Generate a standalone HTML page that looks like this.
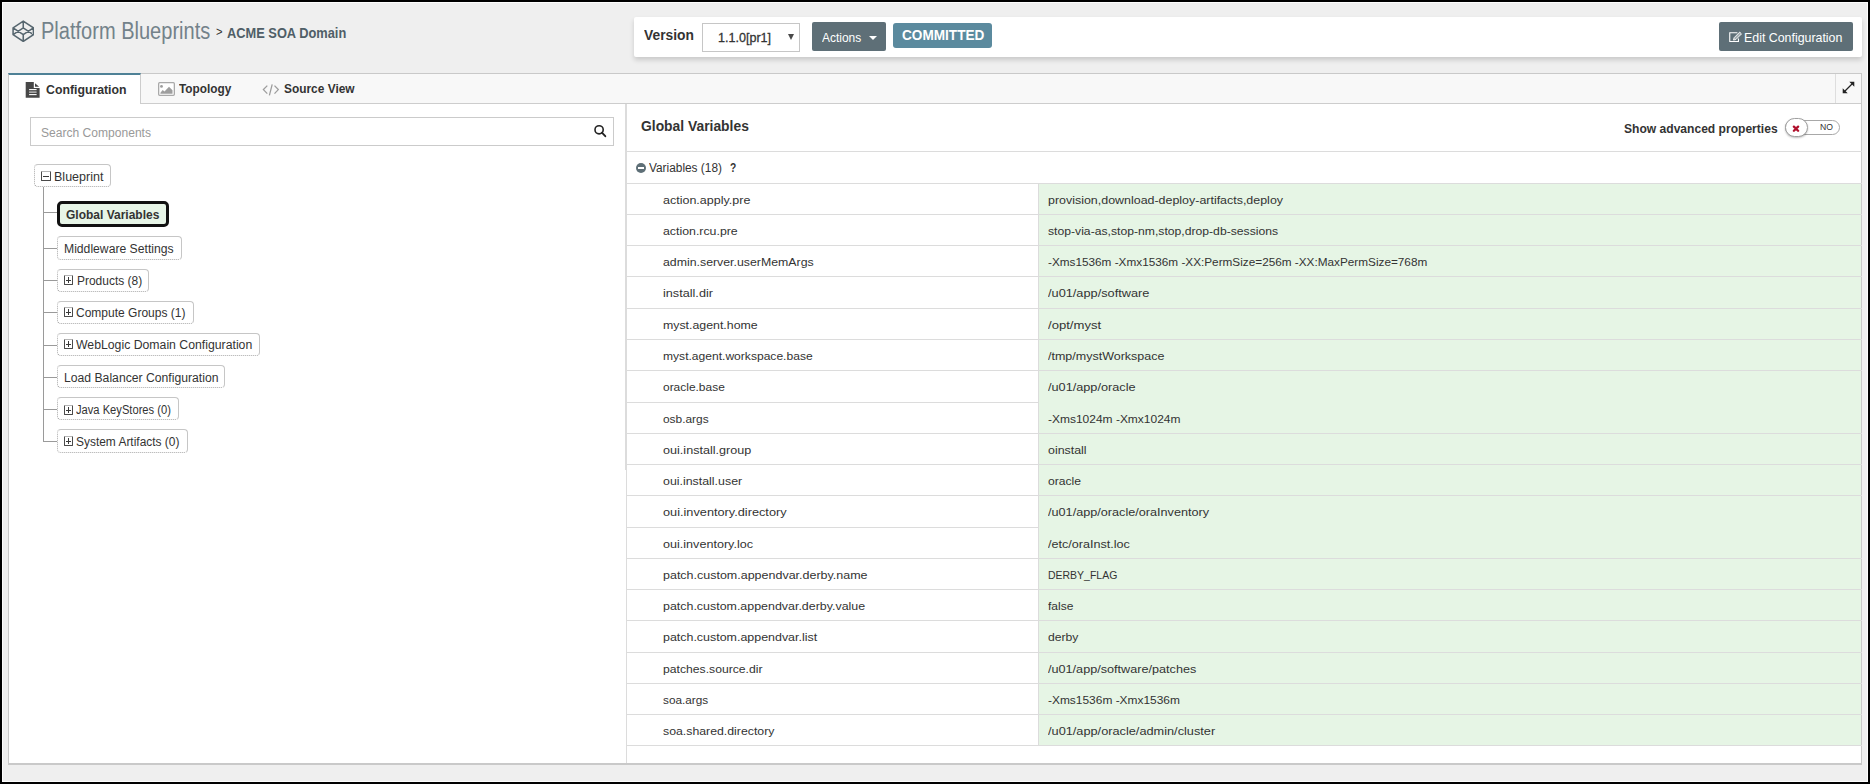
<!DOCTYPE html>
<html><head><meta charset="utf-8">
<style>
*{box-sizing:border-box;margin:0;padding:0}
html,body{width:1870px;height:784px;overflow:hidden;background:#000;font-family:"Liberation Sans",sans-serif}
.a{position:absolute}
.t{position:absolute;white-space:nowrap;transform-origin:0 0;font-family:"Liberation Sans",sans-serif}
.box{position:absolute;border:1px dotted #a9a9a9;border-top:1px solid #c6c6c6;border-right:1px solid #c6c6c6;border-radius:4px;background:#fff}
.hl{position:absolute;height:1px;background:#9a9a9a}
.pm{position:absolute;width:9px;height:10px;border:1px solid #4a4a4a;border-top-color:#b5b5b5;border-radius:1px}
.pm:before{content:"";position:absolute;left:1px;top:4px;width:5px;height:1px;background:#3a3a3a}
.pm.plus:after{content:"";position:absolute;left:3px;top:1px;width:1px;height:6px;background:#3a3a3a}
.pm.w10{width:10px}.pm.w10:before{width:6px}
.rl{position:absolute;left:627px;width:1235px;height:1px;background:#dcdcdc}
</style></head><body>
<div class="a" style="left:2px;top:2px;width:1866px;height:780px;background:#fdfdfd"></div>
<div class="a" style="left:3px;top:3px;width:1864px;height:778px;background:#efefef"></div>

<!-- logo -->
<svg class="a" style="left:11.5px;top:19.7px" width="22.5" height="22.5" viewBox="0 0 64 64">
<path fill="none" stroke="#56666f" stroke-width="4.4" stroke-linejoin="miter" d="M3.06 41.732L32 60.932l28.94-19.2V22.268L32 3.068 3.06 22.268v19.464zm0 0l28.94-19.2 28.94 19.2M3.06 22.268L32 41.468l28.94-19.2M32 3.068v19.2m0 19.2v19.464"/>
</svg>

<!-- version bar -->
<div class="a" style="left:634px;top:17px;width:1228px;height:40px;background:#fff;border-radius:2px;box-shadow:0 3px 5px rgba(0,0,0,.16)"></div>
<div class="a" style="left:702px;top:23px;width:98px;height:29px;border:1px solid #c6c6c6;background:#fff"></div>
<div class="a" style="left:788px;top:34px;width:0;height:0;border-left:3px solid transparent;border-right:3px solid transparent;border-top:6px solid #4a4a4a"></div>
<div class="a" style="left:812px;top:22px;width:74px;height:29px;background:#5e6f77;border-radius:2px"></div>
<div class="a" style="left:869px;top:35.5px;width:0;height:0;border-left:4px solid transparent;border-right:4px solid transparent;border-top:4px solid #fff"></div>
<div class="a" style="left:893px;top:23px;width:99px;height:25px;background:#5b8a9e;border-radius:3px"></div>
<div class="a" style="left:1719px;top:22px;width:134px;height:29px;background:#5e6f77;border-radius:2px"></div>
<svg class="a" style="left:1728px;top:30px" width="16" height="14" viewBox="0 0 16 14">
<path fill="none" stroke="#fff" stroke-width="1.1" d="M9.4 2.75H1.75V11.45H10.45V8.4"/>
<path fill="rgba(255,255,255,.45)" stroke="#fff" stroke-width="0.9" stroke-linejoin="round" d="M5.5 10.1L6.1 7.7 11.7 2.1 13.5 3.9 7.9 9.5z"/>
</svg>

<!-- main panel -->
<div class="a" style="left:8px;top:73px;width:1854px;height:692px;background:#fff;border:1px solid #c9c9c9;border-bottom:2px solid #c9c9c9"></div>
<div class="a" style="left:9px;top:74px;width:1852px;height:30px;background:#f8f8f8;border-bottom:1px solid #cdcdcd"></div>
<div class="a" style="left:8px;top:73px;width:133px;height:31px;background:#fff;border-top:2px solid #4e8196;border-right:1px solid #cdcdcd;border-left:1px solid #c9c9c9"></div>
<div class="a" style="left:9px;top:103px;width:131px;height:1px;background:#fff"></div>
<div class="a" style="left:1835px;top:74px;width:1px;height:29px;background:#dedede"></div>
<!-- expand icon -->
<svg class="a" style="left:1841px;top:80px" width="15" height="15" viewBox="0 0 15 15">
<path fill="none" stroke="#222" stroke-width="1.15" d="M4 11L11 4"/>
<path fill="#222" d="M8.3 1.7H13.3V6.7z M1.7 8.3V13.3H6.7z"/>
</svg>

<!-- tab icons -->
<svg class="a" style="left:25px;top:82px" width="15" height="17" viewBox="0 0 15 17">
<path fill="#474747" d="M0.7 0.1H8.8V5.9H14.6V15.8H0.7z M10 1.2L14.2 4.7H10z"/>
<rect x="4.1" y="7.05" width="7.5" height="1.1" fill="#fff"/><rect x="4.1" y="9.55" width="7.5" height="1.1" fill="#ddd"/><rect x="4.1" y="12.05" width="7.5" height="1.1" fill="#fff"/>
</svg>
<svg class="a" style="left:158px;top:82px" width="17" height="14" viewBox="0 0 17 14">
<rect x="0.65" y="0.65" width="15.7" height="12.7" rx="1" fill="#fff" stroke="#a9a9a9" stroke-width="1.3"/>
<circle cx="3.5" cy="4.4" r="1.4" fill="#9c9c9c"/>
<path fill="#9e9e9e" d="M2.3 11.7L2.6 10.6 4.7 7.9 6.5 9.4 11 4.7 14.5 8.2V11.7z"/>
</svg>
<svg class="a" style="left:262px;top:82px" width="18" height="14" viewBox="0 0 18 14">
<path fill="none" stroke="#9d9d9d" stroke-width="1.3" d="M5.3 3.6L1.4 7.6 5.3 11.6M12.5 3.6L16.3 7.6 12.5 11.6M10.2 2.3L7.4 13.3"/>
</svg>

<!-- left panel -->
<div class="a" style="left:30px;top:117px;width:584px;height:29px;border:1px solid #cbcbcb;background:#fff"></div>
<svg class="a" style="left:592px;top:124px" width="15" height="15" viewBox="0 0 15 15">
<circle cx="7.1" cy="5.8" r="4.1" fill="none" stroke="#222" stroke-width="1.6"/>
<path d="M9.9 8.7L13.3 12.2" stroke="#222" stroke-width="1.9" stroke-linecap="round"/>
</svg>
<div class="a" style="left:625px;top:104px;width:1px;height:366px;background:#dcdcdc"></div>
<div class="a" style="left:626px;top:104px;width:1px;height:659px;background:#dcdcdc"></div>

<!-- tree -->
<div class="a" style="left:43px;top:187px;width:1px;height:255px;background:#9a9a9a"></div>
<div class="hl" style="left:43px;top:212px;width:14px"></div>
<div class="hl" style="left:43px;top:248px;width:14px"></div>
<div class="hl" style="left:43px;top:280px;width:14px"></div>
<div class="hl" style="left:43px;top:312px;width:14px"></div>
<div class="hl" style="left:43px;top:345px;width:14px"></div>
<div class="hl" style="left:43px;top:377px;width:14px"></div>
<div class="hl" style="left:43px;top:409px;width:14px"></div>
<div class="hl" style="left:43px;top:441px;width:14px"></div>
<div class="box" style="left:34px;top:164px;width:77px;height:23px"></div>
<div class="a" style="left:57px;top:201px;width:112px;height:26px;border:3px solid #111;border-radius:5px;background:#e7f5e7"></div>
<div class="box" style="left:57px;top:236px;width:125px;height:24px"></div>
<div class="box" style="left:57px;top:269px;width:92px;height:23px"></div>
<div class="box" style="left:57px;top:301px;width:137px;height:23px"></div>
<div class="box" style="left:57px;top:333px;width:203px;height:23px"></div>
<div class="box" style="left:57px;top:365px;width:168px;height:23px"></div>
<div class="box" style="left:57px;top:397px;width:122px;height:23px"></div>
<div class="box" style="left:57px;top:429px;width:131px;height:24px"></div>
<div class="pm w10" style="left:41px;top:171px"></div>
<div class="pm plus" style="left:64px;top:275px"></div>
<div class="pm plus" style="left:64px;top:307px"></div>
<div class="pm plus" style="left:64px;top:339px"></div>
<div class="pm plus" style="left:64px;top:405px"></div>
<div class="pm plus" style="left:64px;top:436px"></div>

<!-- right panel -->
<div class="rl" style="top:151px"></div>
<div class="rl" style="top:183px"></div>
<div class="a" style="left:635.5px;top:162.8px;width:10.5px;height:10.5px;border-radius:50%;background:#5e6f77"></div>
<div class="a" style="left:637.7px;top:167.3px;width:6.1px;height:1.6px;background:#fff"></div>
<!-- toggle -->
<div class="a" style="left:1785px;top:120px;width:55px;height:15px;border:1px solid #a8a8a8;border-radius:8px;background:#fff"></div>
<div class="a" style="left:1785px;top:118px;width:23px;height:19px;border:1px solid #a0a0a0;border-radius:10px;background:#fff;box-shadow:0 1px 2px rgba(0,0,0,.25)"></div>
<svg class="a" style="left:1792px;top:124.5px" width="8" height="8" viewBox="0 0 8 8"><path d="M1.9 1.6L6.1 5.8M6.1 1.6L1.9 5.8" stroke="#b0102c" stroke-width="2.3" stroke-linecap="round"/></svg>

<div class="a" style="left:1039px;top:184px;width:822px;height:561px;background:#e6f5e5"></div>
<div class="a" style="left:1038px;top:184px;width:1px;height:561px;background:#dcdcdc"></div>
<div class="rl" style="top:214px;width:1235px"></div>
<div class="rl" style="top:245px;width:1235px"></div>
<div class="rl" style="top:276px;width:1235px"></div>
<div class="rl" style="top:308px;width:1235px"></div>
<div class="rl" style="top:339px;width:1235px"></div>
<div class="rl" style="top:370px;width:1235px"></div>
<div class="rl" style="top:402px;width:411px"></div>
<div class="rl" style="top:433px;width:1235px"></div>
<div class="rl" style="top:464px;width:1235px"></div>
<div class="rl" style="top:495px;width:1235px"></div>
<div class="rl" style="top:527px;width:411px"></div>
<div class="rl" style="top:558px;width:1235px"></div>
<div class="rl" style="top:589px;width:1235px"></div>
<div class="rl" style="top:620px;width:1235px"></div>
<div class="rl" style="top:652px;width:1235px"></div>
<div class="rl" style="top:683px;width:1235px"></div>
<div class="rl" style="top:714px;width:1235px"></div>
<div class="rl" style="top:745px;width:1235px"></div>

<span id="t0" class="t" style="left:40.90px;top:20.01px;font-size:23.5px;line-height:23.5px;font-weight:400;color:#73828a;transform:scaleX(0.8524);">Platform Blueprints</span>
<span id="t1" class="t" style="left:216.30px;top:25.84px;font-size:12px;line-height:12px;font-weight:400;color:#333;transform:scaleX(0.9324);">&gt;</span>
<span id="t2" class="t" style="left:226.60px;top:25.85px;font-size:14px;line-height:14px;font-weight:700;color:#4f5e67;transform:scaleX(0.9162);">ACME SOA Domain</span>
<span id="t3" class="t" style="left:643.70px;top:27.73px;font-size:14.5px;line-height:14.5px;font-weight:700;color:#333;transform:scaleX(0.9525);">Version</span>
<span id="t4" class="t" style="left:717.70px;top:30.57px;font-size:13.5px;line-height:13.5px;font-weight:400;color:#333;transform:scaleX(0.9305);-webkit-text-stroke:0.3px #333;">1.1.0[pr1]</span>
<span id="t5" class="t" style="left:821.90px;top:31.10px;font-size:13px;line-height:13px;font-weight:400;color:#fff;transform:scaleX(0.9201);">Actions</span>
<span id="t6" class="t" style="left:901.50px;top:27.83px;font-size:14.5px;line-height:14.5px;font-weight:700;color:#fff;transform:scaleX(0.9386);">COMMITTED</span>
<span id="t7" class="t" style="left:1744.10px;top:30.50px;font-size:13px;line-height:13px;font-weight:400;color:#fff;transform:scaleX(0.9517);">Edit Configuration</span>
<span id="t8" class="t" style="left:45.70px;top:82.97px;font-size:13.5px;line-height:13.5px;font-weight:700;color:#333;transform:scaleX(0.9104);">Configuration</span>
<span id="t9" class="t" style="left:178.70px;top:81.87px;font-size:13.5px;line-height:13.5px;font-weight:700;color:#333;transform:scaleX(0.8760);">Topology</span>
<span id="t10" class="t" style="left:283.80px;top:81.87px;font-size:13.5px;line-height:13.5px;font-weight:700;color:#333;transform:scaleX(0.8817);">Source View</span>
<span id="t11" class="t" style="left:41.40px;top:127.42px;font-size:12.5px;line-height:12.5px;font-weight:400;color:#999;transform:scaleX(0.9652);">Search Components</span>
<span id="t12" class="t" style="left:53.80px;top:171.42px;font-size:12.5px;line-height:12.5px;font-weight:400;color:#333;transform:scaleX(1.0012);">Blueprint</span>
<span id="t13" class="t" style="left:66.30px;top:209.32px;font-size:12.5px;line-height:12.5px;font-weight:700;color:#333;transform:scaleX(0.9594);">Global Variables</span>
<span id="t14" class="t" style="left:64.10px;top:243.32px;font-size:12.5px;line-height:12.5px;font-weight:400;color:#333;transform:scaleX(0.9736);">Middleware Settings</span>
<span id="t15" class="t" style="left:76.60px;top:275.42px;font-size:12.5px;line-height:12.5px;font-weight:400;color:#333;transform:scaleX(0.9566);">Products (8)</span>
<span id="t16" class="t" style="left:76.10px;top:307.42px;font-size:12.5px;line-height:12.5px;font-weight:400;color:#333;transform:scaleX(0.9608);">Compute Groups (1)</span>
<span id="t17" class="t" style="left:76.10px;top:338.72px;font-size:12.5px;line-height:12.5px;font-weight:400;color:#333;transform:scaleX(0.9806);">WebLogic Domain Configuration</span>
<span id="t18" class="t" style="left:63.70px;top:372.32px;font-size:12.5px;line-height:12.5px;font-weight:400;color:#333;transform:scaleX(0.9748);">Load Balancer Configuration</span>
<span id="t19" class="t" style="left:76.10px;top:404.42px;font-size:12.5px;line-height:12.5px;font-weight:400;color:#333;transform:scaleX(0.8928);">Java KeyStores (0)</span>
<span id="t20" class="t" style="left:76.10px;top:435.62px;font-size:12.5px;line-height:12.5px;font-weight:400;color:#333;transform:scaleX(0.9543);">System Artifacts (0)</span>
<span id="t21" class="t" style="left:640.70px;top:118.73px;font-size:14.5px;line-height:14.5px;font-weight:700;color:#333;transform:scaleX(0.9559);">Global Variables</span>
<span id="t22" class="t" style="left:1624.10px;top:122.20px;font-size:13px;line-height:13px;font-weight:700;color:#333;transform:scaleX(0.9286);">Show advanced properties</span>
<span id="t23" class="t" style="left:1819.60px;top:122.40px;font-size:9.8px;line-height:9.8px;font-weight:400;color:#333;transform:scaleX(0.8812);">NO</span>
<span id="t24" class="t" style="left:648.60px;top:161.82px;font-size:12.5px;line-height:12.5px;font-weight:400;color:#333;transform:scaleX(0.9486);">Variables (18)</span>
<span id="t25" class="t" style="left:729.60px;top:161.82px;font-size:12.5px;line-height:12.5px;font-weight:700;color:#333;transform:scaleX(0.8160);">?</span>
<span id="t26" class="t" style="left:662.60px;top:193.65px;font-size:11.75px;line-height:11.75px;font-weight:400;color:#333;transform:scaleX(1.0643);">action.apply.pre</span>
<span id="t27" class="t" style="left:1047.70px;top:193.65px;font-size:11.75px;line-height:11.75px;font-weight:400;color:#333;transform:scaleX(1.0583);">provision,download-deploy-artifacts,deploy</span>
<span id="t28" class="t" style="left:662.60px;top:224.65px;font-size:11.75px;line-height:11.75px;font-weight:400;color:#333;transform:scaleX(1.0496);">action.rcu.pre</span>
<span id="t29" class="t" style="left:1047.70px;top:224.65px;font-size:11.75px;line-height:11.75px;font-weight:400;color:#333;transform:scaleX(1.0362);">stop-via-as,stop-nm,stop,drop-db-sessions</span>
<span id="t30" class="t" style="left:662.60px;top:255.65px;font-size:11.75px;line-height:11.75px;font-weight:400;color:#333;transform:scaleX(1.0487);">admin.server.userMemArgs</span>
<span id="t31" class="t" style="left:1048.20px;top:255.65px;font-size:11.75px;line-height:11.75px;font-weight:400;color:#333;transform:scaleX(1.0013);">-Xms1536m -Xmx1536m -XX:PermSize=256m -XX:MaxPermSize=768m</span>
<span id="t32" class="t" style="left:662.60px;top:286.65px;font-size:11.75px;line-height:11.75px;font-weight:400;color:#333;transform:scaleX(1.0772);">install.dir</span>
<span id="t33" class="t" style="left:1047.70px;top:286.65px;font-size:11.75px;line-height:11.75px;font-weight:400;color:#333;transform:scaleX(1.0854);">/u01/app/software</span>
<span id="t34" class="t" style="left:662.60px;top:318.65px;font-size:11.75px;line-height:11.75px;font-weight:400;color:#333;transform:scaleX(1.0503);">myst.agent.home</span>
<span id="t35" class="t" style="left:1047.70px;top:318.65px;font-size:11.75px;line-height:11.75px;font-weight:400;color:#333;transform:scaleX(1.1156);">/opt/myst</span>
<span id="t36" class="t" style="left:662.60px;top:349.65px;font-size:11.75px;line-height:11.75px;font-weight:400;color:#333;transform:scaleX(1.0275);">myst.agent.workspace.base</span>
<span id="t37" class="t" style="left:1047.70px;top:349.65px;font-size:11.75px;line-height:11.75px;font-weight:400;color:#333;transform:scaleX(1.0638);">/tmp/mystWorkspace</span>
<span id="t38" class="t" style="left:662.60px;top:380.65px;font-size:11.75px;line-height:11.75px;font-weight:400;color:#333;transform:scaleX(1.0169);">oracle.base</span>
<span id="t39" class="t" style="left:1047.70px;top:380.65px;font-size:11.75px;line-height:11.75px;font-weight:400;color:#333;transform:scaleX(1.0806);">/u01/app/oracle</span>
<span id="t40" class="t" style="left:662.60px;top:412.65px;font-size:11.75px;line-height:11.75px;font-weight:400;color:#333;transform:scaleX(1.0126);">osb.args</span>
<span id="t41" class="t" style="left:1047.70px;top:412.65px;font-size:11.75px;line-height:11.75px;font-weight:400;color:#333;transform:scaleX(1.0194);">-Xms1024m -Xmx1024m</span>
<span id="t42" class="t" style="left:662.60px;top:443.65px;font-size:11.75px;line-height:11.75px;font-weight:400;color:#333;transform:scaleX(1.0734);">oui.install.group</span>
<span id="t43" class="t" style="left:1047.70px;top:443.65px;font-size:11.75px;line-height:11.75px;font-weight:400;color:#333;transform:scaleX(1.0555);">oinstall</span>
<span id="t44" class="t" style="left:662.60px;top:474.65px;font-size:11.75px;line-height:11.75px;font-weight:400;color:#333;transform:scaleX(1.0537);">oui.install.user</span>
<span id="t45" class="t" style="left:1047.70px;top:474.65px;font-size:11.75px;line-height:11.75px;font-weight:400;color:#333;transform:scaleX(1.0331);">oracle</span>
<span id="t46" class="t" style="left:662.60px;top:505.65px;font-size:11.75px;line-height:11.75px;font-weight:400;color:#333;transform:scaleX(1.0835);">oui.inventory.directory</span>
<span id="t47" class="t" style="left:1047.70px;top:505.65px;font-size:11.75px;line-height:11.75px;font-weight:400;color:#333;transform:scaleX(1.0768);">/u01/app/oracle/oraInventory</span>
<span id="t48" class="t" style="left:662.60px;top:537.65px;font-size:11.75px;line-height:11.75px;font-weight:400;color:#333;transform:scaleX(1.0718);">oui.inventory.loc</span>
<span id="t49" class="t" style="left:1047.70px;top:537.65px;font-size:11.75px;line-height:11.75px;font-weight:400;color:#333;transform:scaleX(1.0719);">/etc/oraInst.loc</span>
<span id="t50" class="t" style="left:662.60px;top:568.65px;font-size:11.75px;line-height:11.75px;font-weight:400;color:#333;transform:scaleX(1.0626);">patch.custom.appendvar.derby.name</span>
<span id="t51" class="t" style="left:1047.70px;top:568.65px;font-size:11.75px;line-height:11.75px;font-weight:400;color:#333;transform:scaleX(0.8916);">DERBY_FLAG</span>
<span id="t52" class="t" style="left:662.60px;top:599.65px;font-size:11.75px;line-height:11.75px;font-weight:400;color:#333;transform:scaleX(1.0577);">patch.custom.appendvar.derby.value</span>
<span id="t53" class="t" style="left:1047.70px;top:599.65px;font-size:11.75px;line-height:11.75px;font-weight:400;color:#333;transform:scaleX(1.0216);">false</span>
<span id="t54" class="t" style="left:662.60px;top:630.65px;font-size:11.75px;line-height:11.75px;font-weight:400;color:#333;transform:scaleX(1.0583);">patch.custom.appendvar.list</span>
<span id="t55" class="t" style="left:1047.70px;top:630.65px;font-size:11.75px;line-height:11.75px;font-weight:400;color:#333;transform:scaleX(1.0354);">derby</span>
<span id="t56" class="t" style="left:662.60px;top:662.65px;font-size:11.75px;line-height:11.75px;font-weight:400;color:#333;transform:scaleX(1.0366);">patches.source.dir</span>
<span id="t57" class="t" style="left:1047.70px;top:662.65px;font-size:11.75px;line-height:11.75px;font-weight:400;color:#333;transform:scaleX(1.0762);">/u01/app/software/patches</span>
<span id="t58" class="t" style="left:662.60px;top:693.65px;font-size:11.75px;line-height:11.75px;font-weight:400;color:#333;transform:scaleX(1.0020);">soa.args</span>
<span id="t59" class="t" style="left:1047.70px;top:693.65px;font-size:11.75px;line-height:11.75px;font-weight:400;color:#333;transform:scaleX(1.0154);">-Xms1536m -Xmx1536m</span>
<span id="t60" class="t" style="left:662.60px;top:724.65px;font-size:11.75px;line-height:11.75px;font-weight:400;color:#333;transform:scaleX(1.0467);">soa.shared.directory</span>
<span id="t61" class="t" style="left:1047.70px;top:724.65px;font-size:11.75px;line-height:11.75px;font-weight:400;color:#333;transform:scaleX(1.0845);">/u01/app/oracle/admin/cluster</span>
</body></html>
